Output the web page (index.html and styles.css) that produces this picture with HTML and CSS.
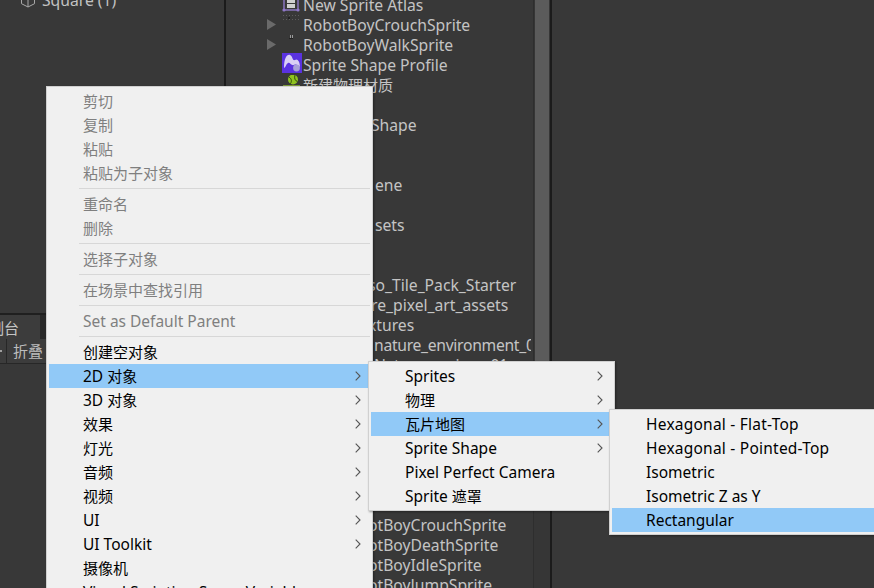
FILE: index.html
```html
<!DOCTYPE html>
<html lang="zh-CN">
<head>
  <meta charset="UTF-8">
  <meta name="viewport" content="width=device-width, initial-scale=1.0">
  <title>Unity Editor Context Menu</title>
  <link rel="stylesheet" href="styles.css">
</head>
<body>

  <svg class="defs" width="0" height="0">
    <symbol id="chevron" viewBox="0 0 6 10">
      <path d="M0.7 0.7 L5 5 L0.7 9.3" fill="none" stroke="#555" stroke-width="1.1"/>
    </symbol>
    <symbol id="fold" viewBox="0 0 10 12">
      <path d="M0 0 L10 6 L0 12 Z" fill="#6a6a6a"/>
    </symbol>
  </svg>

  <div class="editor">
    <div class="left-col">
      <div class="hierarchy">
        <div class="scene-row">
          <svg class="cube" width="16" height="16" viewBox="0 0 16 16">
            <path d="M8 1 L14.5 4.3 V11.7 L8 15 L1.5 11.7 V4.3 Z M1.5 4.3 L8 7.8 L14.5 4.3 M8 7.8 V15" fill="none" stroke="#a8a8a8" stroke-width="1"/>
          </svg>
          <span>Square (1)</span>
        </div>
      </div>
      <div class="console">
        <div class="tabbar">
          <div class="tab"><span class="tab-label">控制台</span></div>
        </div>
        <div class="toolbar">
          <div class="tool-caret"></div>
          <div class="tool-btn">折叠</div>
        </div>
      </div>
    </div>

    <div class="project">
      <div class="file-list">
        <div class="file">
          <svg class="icon" width="18" height="18" viewBox="0 0 18 18">
            <rect x="2" y="0" width="14" height="15" fill="none" stroke="#8f78c8" stroke-width="1.4"/>
            <rect x="5" y="1" width="8" height="3" fill="#cfcfcf"/>
            <rect x="5" y="5" width="8" height="3" fill="#cfcfcf"/>
            <rect x="5" y="9" width="8" height="4" fill="#cfcfcf"/>
            <circle cx="2" cy="15" r="1.6" fill="#8f78c8"/>
            <circle cx="16" cy="15" r="1.6" fill="#8f78c8"/>
          </svg>
          <span>New Sprite Atlas</span>
        </div>
        <div class="file">
          <svg class="fold" width="9" height="11"><use href="#fold"/></svg>
          <svg class="icon" width="18" height="18" viewBox="0 0 18 18">
            <path d="M1 0.5 H17 M1 4.5 H17" stroke="#5c5c5c" stroke-width="1" stroke-dasharray="1 2"/>
            <rect x="6" y="2" width="2" height="2" fill="#222"/>
          </svg>
          <span>RobotBoyCrouchSprite</span>
        </div>
        <div class="file">
          <svg class="fold" width="9" height="11"><use href="#fold"/></svg>
          <svg class="icon" width="18" height="18" viewBox="0 0 18 18">
            <rect x="8" y="0" width="1" height="3" fill="#9a9a9a"/>
            <rect x="10" y="0" width="1" height="3" fill="#9a9a9a"/>
            <rect x="7" y="3" width="4" height="1" fill="#222"/>
          </svg>
          <span>RobotBoyWalkSprite</span>
        </div>
        <div class="file">
          <svg class="icon icon-wide" width="20" height="20" viewBox="0 0 20 20">
            <rect width="20" height="20" fill="#5a32e0"/>
            <path d="M2 15 C2 5 5 1 8 2 C11 3 10 8 13 7 C15 5 18 8 18 14 C16 12 14 11 12 12 C9 13 8 9 6 10 C4 11 4 14 2 15 Z" fill="#d9cff5"/>
            <circle cx="14.5" cy="15" r="3.4" fill="#a79fd8"/>
          </svg>
          <span>Sprite Shape Profile</span>
        </div>
        <div class="file">
          <svg class="icon" width="20" height="18" viewBox="0 0 20 18">
            <circle cx="11" cy="4.5" r="5" fill="#8fc31f"/>
            <path d="M7 2 C10 4 10 7 8 9 M13 0 C12 3 13 6 15.5 6.5" fill="none" stroke="#2f4a10" stroke-width="1"/>
            <rect x="1" y="10" width="17" height="4" fill="#7d9a3a"/>
          </svg>
          <span class="zh">新建物理材质</span>
        </div>
        <div class="file"></div>
        <div class="file cut">Shape</div>
        <div class="file"></div>
        <div class="file"></div>
        <div class="file cut short-a">ene</div>
        <div class="file"></div>
        <div class="file cut short-a">sets</div>
        <div class="file"></div>
        <div class="file"></div>
        <div class="file cut long">so_Tile_Pack_Starter</div>
        <div class="file cut">re_pixel_art_assets</div>
        <div class="file cut long">xtures</div>
        <div class="file cut tight">nature_environment_01</div>
        <div class="file cut tight">Nature_environ_01</div>
        <div class="file"></div>
        <div class="file"></div>
        <div class="file"></div>
        <div class="file"></div>
        <div class="file"></div>
        <div class="file"></div>
        <div class="file"></div>
        <div class="file cut long">otBoyCrouchSprite</div>
        <div class="file cut long">otBoyDeathSprite</div>
        <div class="file cut long">otBoyIdleSprite</div>
        <div class="file cut long">otBoyJumpSprite</div>
      </div>
      <div class="scrollbar"><div class="thumb"></div></div>
    </div>

    <div class="inspector"></div>
  </div>

  <div class="menu menu-main">
    <div class="item off"><span class="zh">剪切</span></div>
    <div class="item off"><span class="zh">复制</span></div>
    <div class="item off"><span class="zh">粘贴</span></div>
    <div class="item off"><span class="zh">粘贴为子对象</span></div>
    <div class="sep"></div>
    <div class="item off"><span class="zh">重命名</span></div>
    <div class="item off"><span class="zh">删除</span></div>
    <div class="sep"></div>
    <div class="item off"><span class="zh">选择子对象</span></div>
    <div class="sep"></div>
    <div class="item off"><span class="zh">在场景中查找引用</span></div>
    <div class="sep"></div>
    <div class="item off">Set as Default Parent</div>
    <div class="sep"></div>
    <div class="item"><span class="zh">创建空对象</span></div>
    <div class="item active">2D <span class="zh">对象</span><svg class="chev" width="6" height="10"><use href="#chevron"/></svg></div>
    <div class="item">3D <span class="zh">对象</span><svg class="chev" width="6" height="10"><use href="#chevron"/></svg></div>
    <div class="item"><span class="zh">效果</span><svg class="chev" width="6" height="10"><use href="#chevron"/></svg></div>
    <div class="item"><span class="zh">灯光</span><svg class="chev" width="6" height="10"><use href="#chevron"/></svg></div>
    <div class="item"><span class="zh">音频</span><svg class="chev" width="6" height="10"><use href="#chevron"/></svg></div>
    <div class="item"><span class="zh">视频</span><svg class="chev" width="6" height="10"><use href="#chevron"/></svg></div>
    <div class="item">UI<svg class="chev" width="6" height="10"><use href="#chevron"/></svg></div>
    <div class="item">UI Toolkit<svg class="chev" width="6" height="10"><use href="#chevron"/></svg></div>
    <div class="item"><span class="zh">摄像机</span></div>
    <div class="item">Visual Scripting Scene Variables</div>
  </div>

  <div class="menu menu-2d">
    <div class="item">Sprites<svg class="chev" width="6" height="10"><use href="#chevron"/></svg></div>
    <div class="item"><span class="zh">物理</span><svg class="chev" width="6" height="10"><use href="#chevron"/></svg></div>
    <div class="item active"><span class="zh">瓦片地图</span><svg class="chev" width="6" height="10"><use href="#chevron"/></svg></div>
    <div class="item">Sprite Shape<svg class="chev" width="6" height="10"><use href="#chevron"/></svg></div>
    <div class="item">Pixel Perfect Camera</div>
    <div class="item">Sprite <span class="zh">遮罩</span></div>
  </div>

  <div class="menu menu-tile">
    <div class="item spaced">Hexagonal - Flat-Top</div>
    <div class="item spaced">Hexagonal - Pointed-Top</div>
    <div class="item">Isometric</div>
    <div class="item">Isometric Z as Y</div>
    <div class="item active">Rectangular</div>
  </div>

</body>
</html>
```

FILE: styles.css
```css
html, body {
  margin: 0;
  height: 100%;
  overflow: hidden;
  background: #383838;
  font-family: "Noto Sans", "Noto Sans CJK SC", sans-serif;
}

.defs {
  display: block;
  height: 0;
}

.zh {
  font-size: 15px;
}

.editor {
  display: flex;
  height: 588px;
}

/* left column */
.left-col {
  width: 224px;
  flex: none;
  overflow: hidden;
  border-right: 2px solid #1b1b1b;
}

.hierarchy {
  height: 313px;
  border-bottom: 2px solid #1f1f1f;
  overflow: hidden;
}

.scene-row {
  display: flex;
  align-items: center;
  gap: 6px;
  height: 20px;
  margin-top: -10px;
  padding-left: 20px;
  font-size: 15.7px;
  color: #c2c2c2;
}

.tabbar {
  height: 24px;
  background: #292929;
}

.tab {
  width: 40px;
  height: 24px;
  background: #3c3c3c;
  overflow: hidden;
}

.tab-label {
  display: block;
  margin-left: -26px;
  width: 70px;
  font-size: 15px;
  line-height: 26px;
  color: #c4c4c4;
}

.toolbar {
  display: flex;
  align-items: center;
  height: 24px;
  background: #3c3c3c;
  border-bottom: 1px solid #272727;
}

.tool-caret {
  width: 2px;
  height: 2px;
  background: #a0a0a0;
}

.tool-btn {
  margin-left: 4px;
  padding: 0 6px;
  height: 24px;
  border-left: 1px solid #272727;
  border-right: 1px solid #272727;
  font-size: 15px;
  line-height: 24px;
  color: #bdbdbd;
}

/* project list */
.project {
  display: flex;
  width: 324px;
  flex: none;
  border-right: 2px solid #1b1b1b;
}

.file-list {
  width: 305px;
  flex: none;
  margin-top: -6px;
  margin-right: 2px;
  overflow: hidden;
}

.file {
  position: relative;
  height: 20px;
  padding-left: 77px;
  font-size: 15.7px;
  line-height: 22px;
  white-space: nowrap;
  color: #c4c4c4;
}

/* rows that show from behind the menu */
.file.cut {
  padding-left: 145px;
}

.file.cut.long {
  padding-left: 142px;
}

.file.cut.short-a {
  padding-left: 149px;
}

.file.cut.tight {
  padding-left: 148px;
  letter-spacing: -0.3px;
}

.icon {
  position: absolute;
  left: 56px;
  top: 1px;
}

.icon-wide {
  left: 56px;
  top: -1px;
}

.fold {
  position: absolute;
  left: 41px;
  top: 5px;
}

.scrollbar {
  width: 16px;
  flex: none;
  background: #363636;
  border-left: 1px solid #2e2e2e;
}

.thumb {
  margin-left: 1px;
  width: 14px;
  height: 500px;
  background: #5b5b5b;
}

.inspector {
  flex: 1;
  background: #383838;
}

/* context menus */
.menu {
  position: absolute;
  box-sizing: border-box;
  background: #f0f0f0;
  border: 1px solid #d0d0d0;
  padding: 2px;
  box-shadow: 1px 1px 2px rgba(0, 0, 0, 0.35);
}

.menu-main {
  left: 46px;
  top: 86px;
  width: 327px;
}

.menu-2d {
  left: 368px;
  top: 361px;
  width: 247px;
  z-index: 1;
}

.menu-tile {
  left: 609px;
  top: 409px;
  width: 290px;
  z-index: 2;
}

.item {
  position: relative;
  height: 24px;
  padding-left: 34px;
  font-size: 15.5px;
  line-height: 24px;
  white-space: nowrap;
  color: #000;
}

.item.off {
  color: #7f7f7f;
}

.item.active {
  background: #91c9f7;
}

.item.spaced {
  letter-spacing: 0.23px;
}

.chev {
  position: absolute;
  right: 9px;
  top: 7px;
}

.sep {
  height: 1px;
  margin: 3px 0 3px 30px;
  background: #d7d7d7;
}
```
